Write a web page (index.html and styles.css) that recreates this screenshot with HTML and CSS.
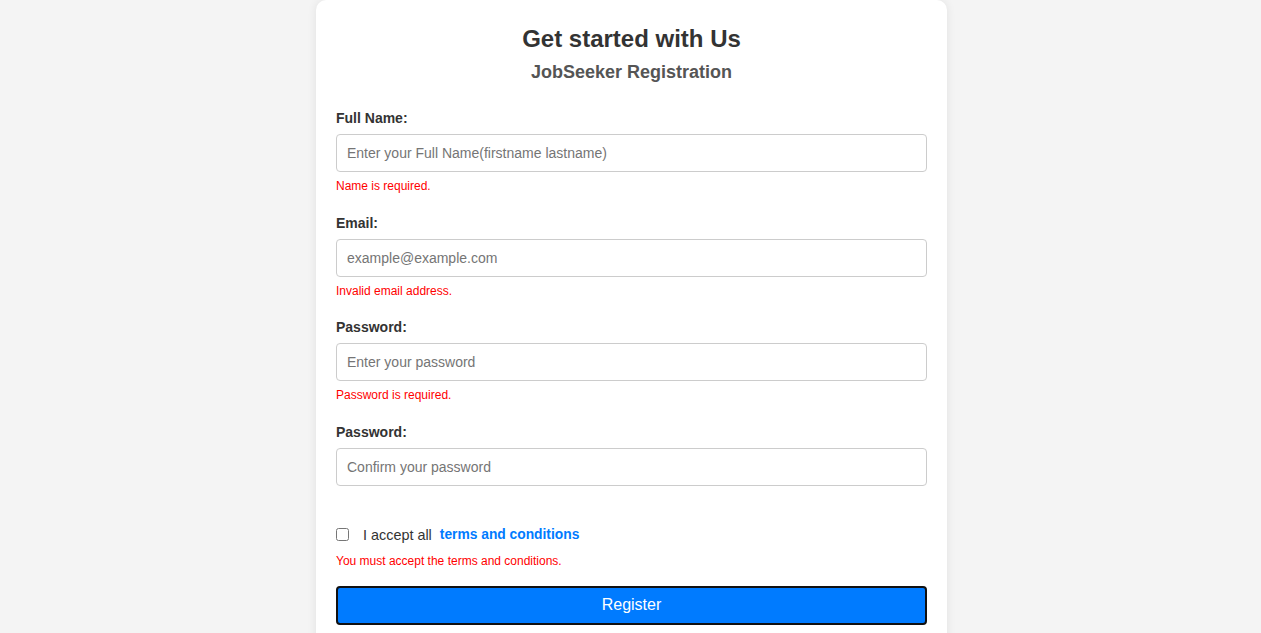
FILE: index.html
```html
<!DOCTYPE html>
<html lang="en">
<head>
<meta charset="utf-8">
<title>JobSeeker Registration</title>
<link rel="stylesheet" href="styles.css">
</head>
<body>
<div class="card">
  <h2 class="title">Get started with Us</h2>
  <h3 class="subtitle">JobSeeker Registration</h3>
  <form class="form">
    <div class="field">
      <label class="label">Full Name:</label>
      <input class="input" type="text" placeholder="Enter your Full Name(firstname lastname)">
      <div class="error">Name is required.</div>
    </div>
    <div class="field">
      <label class="label">Email:</label>
      <input class="input" type="email" placeholder="example@example.com">
      <div class="error">Invalid email address.</div>
    </div>
    <div class="field">
      <label class="label">Password:</label>
      <input class="input" type="password" placeholder="Enter your password">
      <div class="error">Password is required.</div>
    </div>
    <div class="field">
      <label class="label">Password:</label>
      <input class="input" type="password" placeholder="Confirm your password">
    </div>
    <div class="terms">
      <input class="check" type="checkbox">
      <span class="accept">I accept all</span>
      <a class="link" href="#">terms and conditions</a>
    </div>
    <div class="error terms-error">You must accept the terms and conditions.</div>
    <button class="btn" type="button">Register</button>
  </form>
</div>
</body>
</html>
```
FILE: styles.css
```css
html, body {
  margin: 0;
  padding: 0;
}
body {
  background: #f4f4f4;
  font-family: "Liberation Sans", Arial, sans-serif;
  color: #333;
  padding-left: 2px;
}
.card {
  width: 591px;
  margin: 0 auto;
  background: #fff;
  padding: 25px 20px 40px;
  border-radius: 10px;
  box-shadow: 0 0 10px rgba(0, 0, 0, 0.08);
}
.title {
  margin: 0;
  text-align: center;
  font-size: 24px;
  font-weight: bold;
  color: #333;
}
.subtitle {
  margin: 9px 0 0;
  text-align: center;
  font-size: 18px;
  font-weight: bold;
  color: #555;
}
.form {
  margin-top: 27px;
}
.field {
  display: flex;
  flex-direction: column;
  margin-bottom: 21.5px;
}
.label {
  font-size: 14px;
  font-weight: bold;
  color: #333;
  margin-bottom: 8px;
}
.input {
  box-sizing: border-box;
  width: 100%;
  height: 38px;
  padding: 0 10px;
  border: 1px solid #ccc;
  border-radius: 4px;
  font-family: "Liberation Sans", Arial, sans-serif;
  font-size: 14px;
  color: #333;
}
.input::placeholder {
  color: #757575;
}
.error {
  color: #ff0000;
  font-size: 12px;
  margin-top: 7px;
}
.terms {
  display: flex;
  align-items: center;
  margin-top: 41px;
  font-size: 14.4px;
}
.check {
  margin: 0 14px 0 0;
  width: 13px;
  height: 13px;
}
.accept {
  color: #333;
}
.link {
  margin-left: 8px;
  color: #007bff;
  font-weight: bold;
  font-size: 13.8px;
  text-decoration: none;
}
.terms-error {
  margin-top: 11px;
}
.btn {
  display: block;
  box-sizing: border-box;
  width: 100%;
  height: 39px;
  margin-top: 18px;
  background: #007bff;
  color: #fff;
  border: 2px solid #111;
  border-radius: 4px;
  font-family: "Liberation Sans", Arial, sans-serif;
  font-size: 16px;
}
```
